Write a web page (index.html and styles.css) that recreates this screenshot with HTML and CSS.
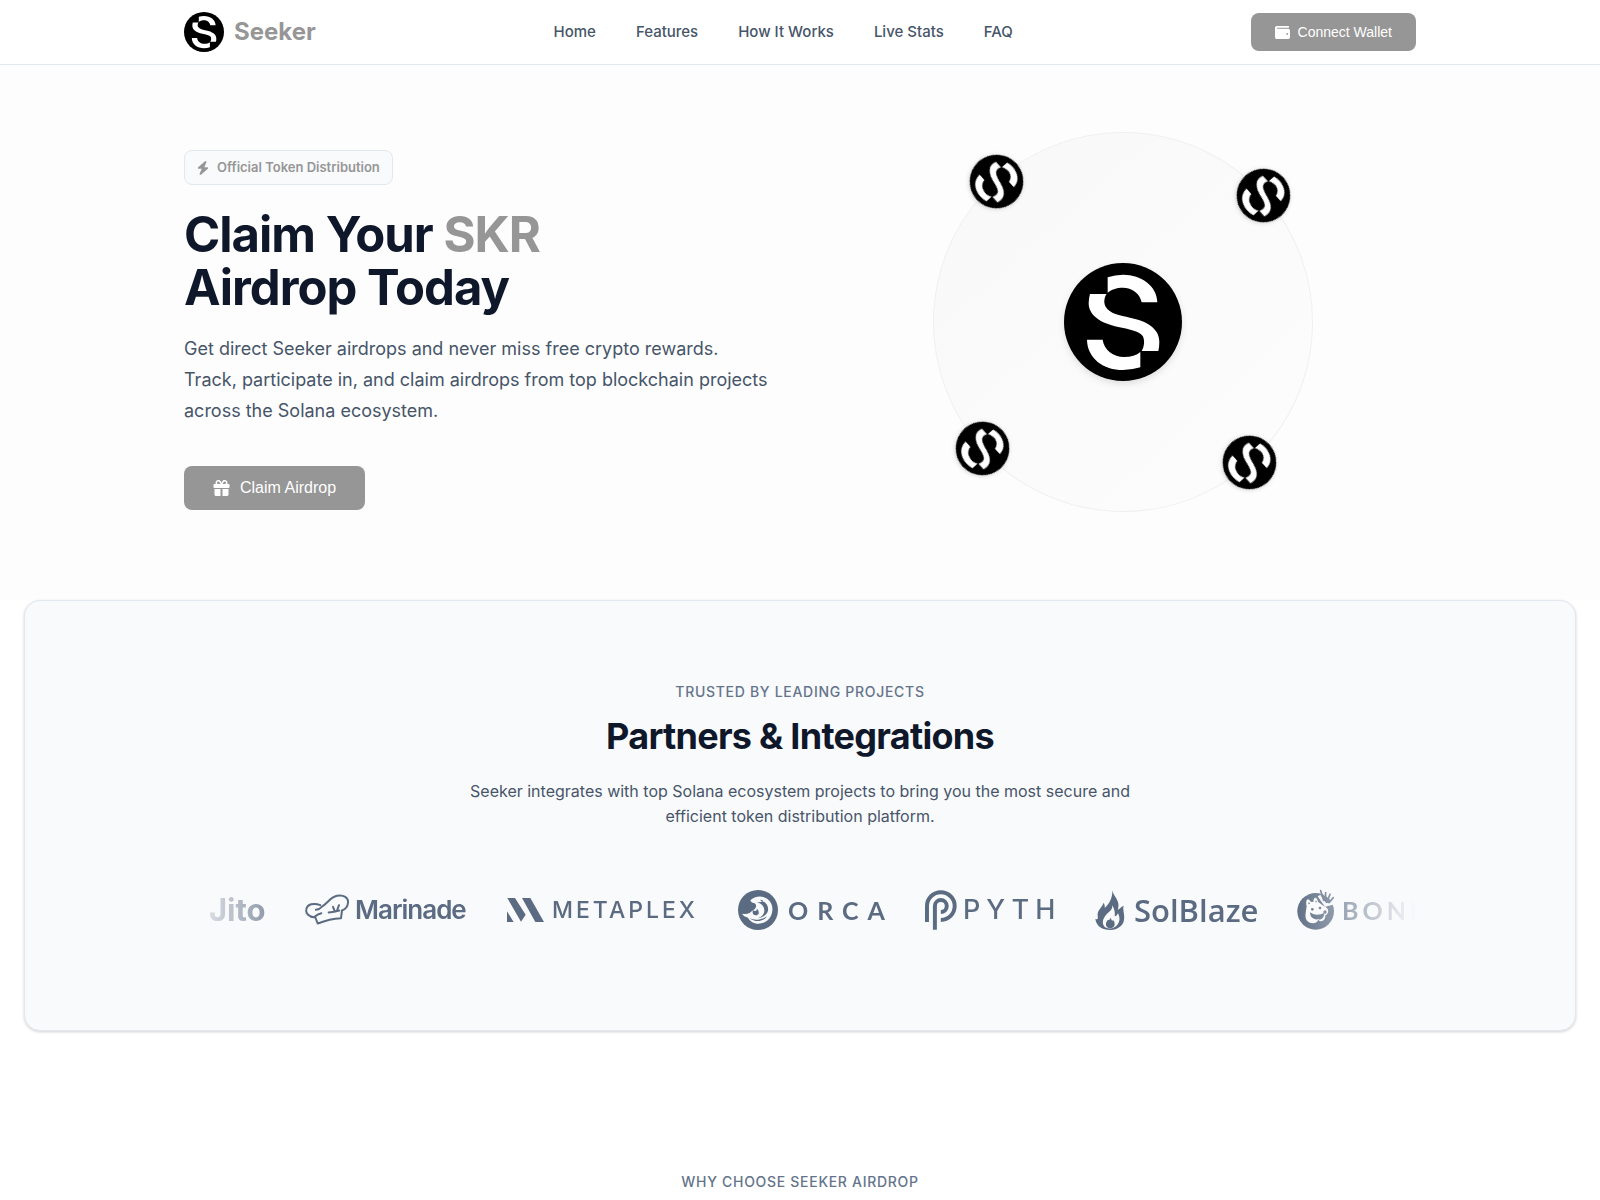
FILE: index.html
```html
<!DOCTYPE html>
<html lang="en">
<head>
<meta charset="utf-8">
<meta name="viewport" content="width=device-width, initial-scale=1">
<title>Seeker Airdrop</title>
<link rel="stylesheet" href="styles.css">
</head>
<body>
<svg class="defs" aria-hidden="true">
  <symbol id="seeker" viewBox="42 39 354 354">
    <circle cx="219" cy="216" r="177" fill="#000"/>
    <g fill="#fff">
      <path d="M173 82Q195 74 219 74C275 74 321 108 322 157H275C270 130 245 113 219 113C200 113 183 119 173 128Z"/>
      <path d="M120 132H170C162 142 160 160 168 172C178 190 210 197 240 203C290 213 328 235 328 275Q328 290 325 303H275C283 290 285 270 278 258C268 243 235 237 205 231C150 220 116 195 116 160Q116 145 120 132Z"/>
      <path d="M111 269H158C162 300 190 321 222 321C243 321 260 316 271 306V352Q245 360 219 360C160 360 112 325 111 269Z"/>
    </g>
  </symbol>
</svg>

<header class="header">
  <div class="container header-row">
    <a class="brand" href="#home"><svg class="brand-mark" aria-hidden="true"><use href="#seeker"/></svg>Seeker</a>
    <nav class="nav">
      <a href="#home">Home</a>
      <a href="#features">Features</a>
      <a href="#how">How It Works</a>
      <a href="#stats">Live Stats</a>
      <a href="#faq">FAQ</a>
    </nav>
    <button class="btn btn-small" type="button">
      <svg class="icon-small" viewBox="0 0 512 512" aria-hidden="true"><path d="M64 32C28.7 32 0 60.7 0 96V416c0 35.3 28.7 64 64 64H448c35.3 0 64-28.7 64-64V192c0-35.3-28.7-64-64-64H80c-8.800 0-16-7.200-16-16s7.200-16 16-16H448c17.700 0 32-14.300 32-32s-14.300-32-32-32H64zM416 272a32 32 0 1 1 0 64 32 32 0 1 1 0-64z"/></svg>
      Connect Wallet
    </button>
  </div>
</header>

<main>
  <section class="hero" id="home">
    <div class="container hero-grid">
      <div class="hero-text">
        <div class="badge">
          <svg class="badge-icon" viewBox="0 0 448 512" aria-hidden="true"><path d="M349.400 44.600c5.900-13.700 1.500-29.700-10.600-38.500s-28.600-8-39.900 1.800l-256 224c-10 8.800-13.600 22.900-8.900 35.300S50.700 288 64 288H175.500L98.600 467.400c-5.900 13.700-1.500 29.700 10.600 38.500s28.600 8 39.900-1.800l256-224c10-8.800 13.600-22.900 8.900-35.300s-16.600-20.700-30-20.700H272.500L349.400 44.600z"/></svg>
          Official Token Distribution
        </div>
        <h1>Claim Your <span class="accent">SKR</span><br>Airdrop Today</h1>
        <p class="lead">Get direct Seeker airdrops and never miss free crypto rewards. Track, participate in, and claim airdrops from top blockchain projects across the Solana ecosystem.</p>
        <button class="btn btn-large" type="button">
          <svg class="icon-large" viewBox="0 0 512 512" aria-hidden="true"><path d="M190.500 68.800L225.300 128H224 152c-22.100 0-40-17.900-40-40s17.900-40 40-40h2.200c14.900 0 28.800 7.900 36.300 20.800zM64 88c0 14.400 3.500 28 9.600 40H32c-17.700 0-32 14.300-32 32v64c0 17.700 14.300 32 32 32H480c17.700 0 32-14.300 32-32V160c0-17.700-14.300-32-32-32H438.400c6.100-12 9.600-25.600 9.600-40c0-48.600-39.400-88-88-88h-2.200c-31.900 0-61.500 16.900-77.700 44.400L256 85.500l-24.100-41C215.700 16.900 186.100 0 154.200 0H152C103.400 0 64 39.400 64 88zm336 0c0 22.100-17.900 40-40 40H288h-1.300l34.800-59.200C329.100 55.900 342.900 48 357.800 48H360c22.100 0 40 17.900 40 40zM32 288V464c0 26.500 21.500 48 48 48H224V288H32zM288 512H432c26.500 0 48-21.500 48-48V288H288V512z"/></svg>
          Claim Airdrop
        </button>
      </div>
      <div class="orbit">
        <div class="ring">
          <svg class="coin coin-top" aria-hidden="true"><use href="#seeker"/></svg>
          <svg class="coin coin-right" aria-hidden="true"><use href="#seeker"/></svg>
          <svg class="coin coin-bottom" aria-hidden="true"><use href="#seeker"/></svg>
          <svg class="coin coin-left" aria-hidden="true"><use href="#seeker"/></svg>
        </div>
        <svg class="core" aria-hidden="true"><use href="#seeker"/></svg>
      </div>
    </div>
  </section>

  <section class="partners">
    <div class="container">
      <p class="eyebrow">TRUSTED BY LEADING PROJECTS</p>
      <h2>Partners &amp; Integrations</h2>
      <p class="sub">Seeker integrates with top Solana ecosystem projects to bring you the most secure and efficient token distribution platform.</p>
      <div class="marquee">
        <div class="logo jito">Jito</div>
        <div class="logo marinade">
          <svg viewBox="344 73 132 92" width="44" height="31" fill="none" stroke="currentColor" stroke-width="6" stroke-linecap="round" stroke-linejoin="round" aria-hidden="true"><path d="M374 142C356 143 345 130 348 118C351 103 370 98 390 106M377 120C386 119 392 114 398 108C412 100 420 82 440 78C460 74 475 84 473 98C472 111 464 119 455 122L452 145C428 146 402 153 382 161L374 140C380 134 386 132 393 130M415 128Q432 127 447 122M428 111L433 124M446 106L440 122"/></svg>
          <span>Marinade</span>
        </div>
        <div class="logo metaplex">
          <svg viewBox="52 84 111 72" width="37" height="24" fill="currentColor" aria-hidden="true"><path d="M52 124L72 156H52ZM53 84H76L108 134L94 155ZM97 84H122L163 156H137Z"/></svg>
          <span>METAPLEX</span>
        </div>
        <div class="logo orca">
          <svg viewBox="744 60 120 120" width="40" height="40" aria-hidden="true"><circle cx="804" cy="120" r="60" fill="currentColor"/><path fill="#f9fafc" d="M781 91C792 80 812 76 827 84C841 91 849 105 847 122C845 144 829 160 806 161C790 161 779 153 774 143C768 140 760 139 756 131C765 133 772 132 779 129C786 121 793 120 797 113C800 107 798 102 792 99C787 99 782 96 781 91Z"/><path fill="currentColor" d="M796 96C812 98 824 108 823 123C822 135 813 141 803 145C817 143 831 135 834 122C836 110 830 100 820 94C812 98 803 97 796 96ZM789 121C785 131 792 138 802 135C808 132 808 124 801 116C800 124 795 125 789 121ZM779 144C792 152 812 151 831 139C821 155 795 159 779 144ZM810 89Q819 90 823 96Q815 97 810 89Z"/></svg>
          <span>ORCA</span>
        </div>
        <div class="logo pyth">
          <svg viewBox="45 60 97 120" width="32" height="40" fill="none" stroke="currentColor" stroke-width="12" aria-hidden="true"><path d="M51 156V108A42 42 0 0 1 135 108A42 42 0 0 1 93 150M75 180V108A18 18 0 0 1 111 108A18 18 0 0 1 93 126"/></svg>
          <span>PYTH</span>
        </div>
        <div class="logo solblaze">
          <svg viewBox="554 60 90 120" width="30" height="40" aria-hidden="true"><path fill="currentColor" fill-rule="evenodd" d="M606 61C609 77 622 86 624 101C625 108 624 114 622 119C629 117 631 110 640 107C636 120 644 132 641 150C638 168 622 179 600 180C576 179 558 170 555 146C562 151 564 145 562 137C560 121 574 113 580 98C583 104 584 109 583 114C598 101 607 82 606 61ZM606 106C607 121 595 125 587 135C575 149 575 162 584 172C600 179 612 175 620 166C630 154 629 143 623 130C620 136 617 139 613 139C615 127 612 117 606 106Z"/><path fill="currentColor" d="M601 142C600 148 598 151 592 150C583 161 586 174 600 175C614 174 617 160 608 150C605 155 603 150 601 142Z"/></svg>
          <span>SolBlaze</span>
        </div>
        <div class="logo bonk">
          <svg viewBox="110 58 111 123" width="37" height="41" aria-hidden="true"><circle cx="166" cy="125" r="55" fill="currentColor"/><path fill="none" stroke="#f9fafc" stroke-width="9" d="M176 78L196 106L224 99"/><path fill="none" stroke="currentColor" stroke-width="5" stroke-linecap="round" d="M190 92L181 63M195 92L196 69M201 94L209 74M206 99L219 84"/><path fill="#f9fafc" d="M139 110C135 92 141 80 151 96L159 97C160 79 170 81 173 96C181 103 188 107 197 113C207 119 205 134 195 137C196 154 181 160 174 150C169 163 151 164 140 153C132 143 137 126 139 110Z"/><path fill="currentColor" d="M149 128C160 138 181 136 192 129C192 143 184 151 173 149C160 151 149 143 149 128ZM144 104Q144 93 149 102ZM165 98Q166 87 170 98Z"/><circle cx="156" cy="119" r="4" fill="currentColor"/><circle cx="179" cy="115" r="4" fill="currentColor"/><circle cx="194" cy="127" r="5" fill="currentColor"/></svg>
          <span>BONK</span>
        </div>
      </div>
    </div>
  </section>

  <section class="features" id="features">
    <p class="eyebrow">WHY CHOOSE SEEKER AIRDROP</p>
  </section>
</main>
</body>
</html>
```
FILE: styles.css
```css
* { box-sizing: border-box; }

body {
  margin: 0;
  background: #fff;
  color: #0f172a;
  font-family: Inter, "Liberation Sans", sans-serif;
  font-size: 16px;
}

h1, h2, p { margin: 0; }

.defs {
  display: block;
  width: 0;
  height: 0;
}

.container {
  width: 100%;
  max-width: 1280px;
  margin: 0 auto;
  padding: 0 24px;
}

/* Header */
.header { border-bottom: 1px solid #e2e8f0; }

.header-row {
  display: flex;
  align-items: center;
  justify-content: space-between;
  padding-top: 12px;
  padding-bottom: 12px;
}

.brand {
  display: flex;
  align-items: center;
  gap: 10px;
  color: #969696;
  font-size: 24px;
  font-weight: 700;
  line-height: 38px;
  text-decoration: none;
}

.brand-mark {
  width: 40px;
  height: 40px;
}

.nav {
  display: flex;
  gap: 40px;
}

.nav a {
  color: #475569;
  font-size: 15px;
  font-weight: 500;
  line-height: 24px;
  text-decoration: none;
}

.btn {
  display: inline-flex;
  align-items: center;
  border: 0;
  border-radius: 8px;
  background: #969696;
  color: #fff;
  font-family: "Liberation Sans", Arial, sans-serif;
  cursor: pointer;
}

.btn svg { fill: currentColor; }

.btn-small {
  height: 38px;
  gap: 8px;
  padding: 0 24px;
  font-size: 14px;
}

.btn-large {
  height: 44px;
  gap: 10px;
  padding: 0 29px;
  font-size: 16px;
}

.icon-small {
  width: 15px;
  height: 15px;
}

.icon-large {
  width: 17px;
  height: 16px;
}

/* Hero */
.hero {
  padding: 67px 0 88px;
  background: #fdfdfd;
}

.hero-grid {
  display: grid;
  grid-template-columns: 1fr 1fr;
  gap: 60px;
}

.hero-text { padding-top: 18px; }

.badge {
  display: flex;
  align-items: center;
  gap: 8px;
  width: fit-content;
  height: 35px;
  padding: 0 12px;
  border: 1px solid #e2e8f0;
  border-radius: 8px;
  background: #f8fafc;
  color: #969696;
  font-size: 13px;
  font-weight: 600;
  line-height: 21px;
}

.badge-icon {
  width: 12px;
  height: 14px;
  fill: currentColor;
}

h1 {
  margin-top: 23px;
  font-size: 49px;
  font-weight: 700;
  line-height: 53px;
  letter-spacing: -0.02em;
}

.accent { color: #969696; }

.lead {
  margin: 19px 0 40px;
  color: #475569;
  font-size: 18px;
  line-height: 31px;
}

.orbit {
  display: grid;
  place-items: center;
}

.orbit > * { grid-area: 1 / 1; }

.ring {
  position: relative;
  width: 380px;
  height: 380px;
  border: 1px solid #f0f0f0;
  border-radius: 50%;
  background: linear-gradient(90deg, #f9f9f9, #fcfcfc);
  transform: rotate(48deg);
}

.coin {
  position: absolute;
  width: 54px;
  height: 54px;
  border-radius: 50%;
  filter: drop-shadow(0 1px 2px rgba(15, 23, 42, 0.2));
}

.coin-top { top: -27px; left: calc(50% - 27px); }
.coin-right { top: calc(50% - 27px); right: -27px; }
.coin-bottom { bottom: -27px; left: calc(50% - 27px); }
.coin-left { top: calc(50% - 27px); left: -27px; }

.core {
  position: relative;
  width: 118px;
  height: 118px;
  filter: drop-shadow(0 3px 3px rgba(15, 23, 42, 0.12));
}

/* Partners */
.partners {
  margin: 0 24px;
  padding: 80px 0 100px;
  border: 1px solid #e2e8f0;
  border-radius: 16px;
  background: #f9fafc;
  box-shadow: 0 1px 3px rgba(0, 0, 0, 0.18);
  text-align: center;
}

.eyebrow {
  color: #64748b;
  font-size: 14px;
  font-weight: 500;
  line-height: 22px;
  letter-spacing: 0.05em;
}

h2 {
  margin-top: 12px;
  font-size: 36px;
  font-weight: 700;
  line-height: 43px;
  letter-spacing: -0.02em;
}

.sub {
  max-width: 700px;
  margin: 21px auto 60px;
  color: #475569;
  font-size: 16px;
  line-height: 25px;
}

.marquee {
  display: flex;
  align-items: center;
  gap: 40px;
  height: 41px;
  padding-left: 25px;
  overflow: hidden;
  color: #5b6b82;
  -webkit-mask-image: linear-gradient(90deg, transparent, #000 10%, #000 90%, transparent);
  mask-image: linear-gradient(90deg, transparent, #000 10%, #000 90%, transparent);
}

.logo {
  display: flex;
  flex: none;
  align-items: center;
  line-height: 40px;
  white-space: nowrap;
}

.logo svg { flex: none; }

.jito {
  width: 56px;
  font-size: 31px;
  font-weight: 700;
}

.marinade {
  width: 162px;
  gap: 6px;
  font-size: 26px;
  font-weight: 600;
  letter-spacing: -1px;
}

.metaplex {
  width: 191px;
  gap: 8px;
  font-size: 23px;
  font-weight: 500;
  letter-spacing: 3px;
}

.orca {
  width: 147px;
  gap: 10px;
  font-family: Lato, sans-serif;
  font-size: 25px;
  font-weight: 700;
  letter-spacing: 9px;
}

.pyth {
  width: 130px;
  gap: 6px;
  font-size: 27px;
  font-weight: 500;
  letter-spacing: 6px;
}

.solblaze {
  width: 162px;
  gap: 9px;
  font-family: "Open Sans", sans-serif;
  font-size: 31px;
  font-weight: 600;
}

.bonk {
  gap: 8px;
  font-family: Lato, sans-serif;
  font-size: 25px;
  font-weight: 700;
  letter-spacing: 4px;
}

/* Features */
.features {
  padding: 140px 24px 0;
  text-align: center;
}
```
